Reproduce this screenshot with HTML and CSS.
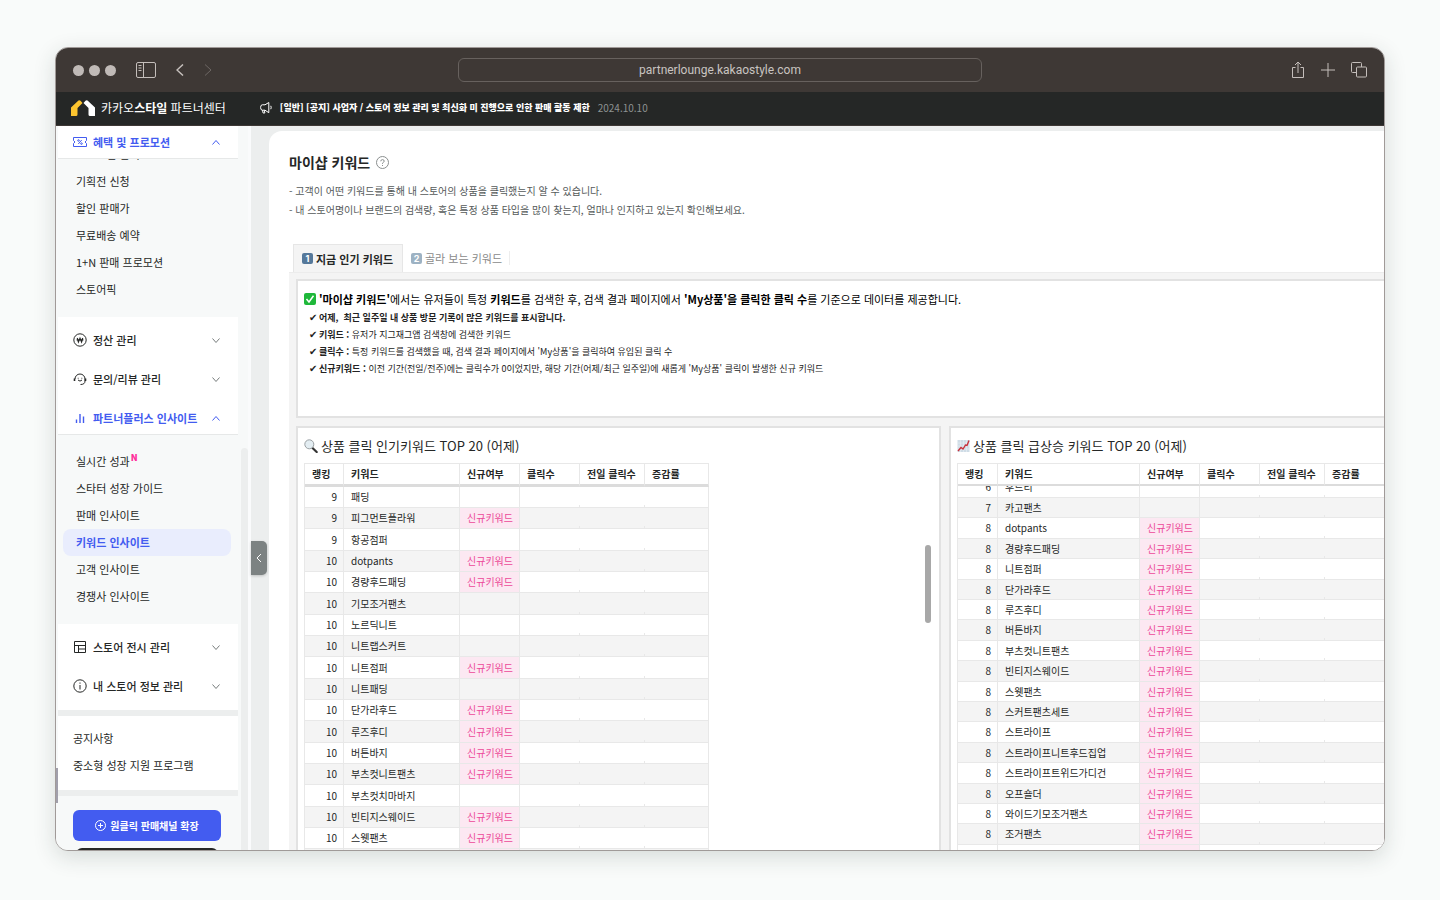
FILE: index.html
```html
<!DOCTYPE html>
<html lang="ko">
<head>
<meta charset="utf-8">
<title>카카오스타일 파트너센터</title>
<link rel="stylesheet" href="styles.css">
</head>
<body>
<div class="window">
  <div class="toolbar">
    <div class="tools">
      <span class="dots"><i></i><i></i><i></i></span>
      <button class="tool" aria-label="사이드바"><svg width="20" height="16" viewBox="0 0 20 16"><rect x=".5" y=".5" width="19" height="15" rx="1.5"/><path d="M7.500 .5v15M2.500 3.500h3M2.500 6h3M2.500 8.500h3"/></svg></button>
      <button class="tool back" aria-label="뒤로"><svg width="8" height="12" viewBox="0 0 8 12"><path d="M7 .5 1 6l6 5.500" stroke-width="1.500"/></svg></button>
      <button class="tool forward" aria-label="앞으로"><svg width="8" height="12" viewBox="0 0 8 12"><path d="m1 .5 6 5.500-6 5.500"/></svg></button>
    </div>
    <input class="address" aria-label="주소" value="partnerlounge.kakaostyle.com">
    <div class="tools right">
      <button class="tool" aria-label="공유"><svg width="14" height="18" viewBox="0 0 14 18"><path d="M4.500 6.500h-3v10h11v-10h-3M7 12V1.500M4 4l3-3 3 3"/></svg></button>
      <button class="tool" aria-label="새 탭"><svg width="14" height="14" viewBox="0 0 14 14"><path d="M7 0v14M0 7h14"/></svg></button>
      <button class="tool" aria-label="탭 개요"><svg width="16" height="16" viewBox="0 0 16 16"><path d="M5 10.500H1.500a1 1 0 0 1-1-1v-8a1 1 0 0 1 1-1h8a1 1 0 0 1 1 1V5"/><rect x="5.500" y="5" width="10" height="10" rx="1"/></svg></button>
    </div>
  </div>
  <header class="topbar">
    <a class="brand" href="#"><svg width="24" height="16" viewBox="0 0 24 16"><path d="M0 16V7.500L7.500 .5Q8.500-.2 9.500 .8L11.500 3 6.500 8v6.500Q6.500 16 5 16z" fill="#fdc52f"/><path d="M12.500 3 14.500 .8Q15.500-.2 16.500 .5L24 7.500V16h-5q-1.500 0-1.500-1.500V8z" fill="#fff"/></svg><span>카카오<b>스타일</b> 파트너센터</span></a>
    <a class="notice" href="#"><svg width="12" height="12" viewBox="0 0 12 12" fill="none" stroke="#fff"><path d="M5 2.800H2.300Q.6 2.800 .6 5.500T2.300 8.200H5L8.800 10.700V.5L5 2.800M2.500 8.200l.6 2.800h1.700l-.4-2.800M10.800 3.800q.8 1.700 0 3.400"/></svg><strong>[일반] [공지] 사업자 / 스토어 정보 관리 및 최신화 미 진행으로 인한 판매 활동 제한</strong><time>2024.10.10</time></a>
  </header>
  <div class="body">
    <nav class="sidebar">
      <div class="menu">
        <div class="heads first"><button class="head on"><svg class="ico" viewBox="0 0 14 14"><path d="M.5 2.500h13v3l-1.500 1.500 1.500 1.500v3H.5v-3L2 7 .5 5.500zM8.700 5 5.300 9"/><circle cx="5.500" cy="5.500" r=".8"/><circle cx="8.500" cy="8.600" r=".8"/></svg><span>혜택 및 프로모션</span><svg class="chev" viewBox="0 0 8 5"><path d="m.5 4.500 3.500-4 3.500 4"/></svg></button></div>
        <div class="sub scrolled"><ul>
          <li><a href="#">프로모션 관리</a></li><li><a href="#">기획전 신청</a></li><li><a href="#">할인 판매가</a></li><li><a href="#">무료배송 예약</a></li><li><a href="#">1+N 판매 프로모션</a></li><li><a href="#">스토어픽</a></li>
        </ul></div>
        <div class="heads">
          <button class="head"><svg class="ico" viewBox="0 0 14 14"><circle cx="7" cy="7" r="6.200"/><path d="m4.300 5 1.100 4L7 5.300 8.600 9l1.100-4M3.600 6.800h6.800" stroke-width="1.200"/></svg><span>정산 관리</span><svg class="chev" viewBox="0 0 8 5"><path d="m.5 .5 3.500 4 3.500-4"/></svg></button>
          <button class="head"><svg class="ico" viewBox="0 0 14 14"><path d="M2 7a5 5 0 0 1 10 0v2q0 3.500-4.500 3.500M5 8q2 2.200 4 0M5.200 5.800v.8M8.800 5.800v.8"/><path d="M1.500 6.500V9M12.500 6.500V9" stroke-width="1.600"/></svg><span>문의/리뷰 관리</span><svg class="chev" viewBox="0 0 8 5"><path d="m.5 .5 3.500 4 3.500-4"/></svg></button>
          <button class="head on"><svg class="ico" viewBox="0 0 14 14"><path d="M3.500 8.500V12M7 3v9M10.500 5.500V12" stroke-width="1.400"/></svg><span>파트너플러스 인사이트</span><svg class="chev" viewBox="0 0 8 5"><path d="m.5 4.500 3.500-4 3.500 4"/></svg></button>
        </div>
        <div class="sub"><ul>
          <li><a href="#">실시간 성과<sup>N</sup></a></li><li><a href="#">스타터 성장 가이드</a></li><li><a href="#">판매 인사이트</a></li><li><a class="current" href="#">키워드 인사이트</a></li><li><a href="#">고객 인사이트</a></li><li><a href="#">경쟁사 인사이트</a></li>
        </ul></div>
        <div class="heads last">
          <button class="head"><svg class="ico" viewBox="0 0 14 14"><path d="M1.500 1.500h11v11h-11zM1.500 5.500h11M5.500 5.500v7M5.500 9h7"/></svg><span>스토어 전시 관리</span><svg class="chev" viewBox="0 0 8 5"><path d="m.5 .5 3.500 4 3.500-4"/></svg></button>
          <button class="head"><svg class="ico" viewBox="0 0 14 14"><circle cx="7" cy="7" r="6.200"/><path d="M7 6v4.500M7 3.500v1.200"/></svg><span>내 스토어 정보 관리</span><svg class="chev" viewBox="0 0 8 5"><path d="m.5 .5 3.500 4 3.500-4"/></svg></button>
        </div>
        <ul class="links"><li><a href="#">공지사항</a></li><li><a href="#">중소형 성장 지원 프로그램</a></li></ul>
        <div class="actions"><button class="primary"><svg width="11" height="11" viewBox="0 0 11 11" fill="none" stroke="#fff"><circle cx="5.500" cy="5.500" r="5"/><path d="M5.500 3v5M3 5.500h5"/></svg>원클릭 판매채널 확장</button><button class="dark" aria-label="더보기"></button></div>
      </div>
      <div class="track"></div>
    </nav>
    <div class="gutter"><button class="fold" aria-label="메뉴 접기"><svg width="6" height="10" viewBox="0 0 6 10"><path d="M5 1 1 5l4 4" fill="none" stroke="#fff"/></svg></button></div>
    <main class="page">
      <h1>마이샵 키워드 <svg width="13" height="13" viewBox="0 0 13 13" fill="none" stroke="#8a8f8f"><circle cx="6.500" cy="6.500" r="6"/><path d="M4.800 5.300Q4.800 3.600 6.500 3.600T8.200 5.200Q8.200 6 6.500 7v.8M6.500 9v1"/></svg></h1>
      <p class="lead">- 고객이 어떤 키워드를 통해 내 스토어의 상품을 클릭했는지 알 수 있습니다.<br>- 내 스토어명이나 브랜드의 검색량, 혹은 특정 상품 타입을 많이 찾는지, 얼마나 인지하고 있는지 확인해보세요.</p>
      <div class="tabs"><button class="tab active"><i>1</i>지금 인기 키워드</button><button class="tab"><i>2</i>골라 보는 키워드</button><span class="rule"></span></div>
      <div class="board">
        <section class="box info">
          <h2><svg width="12" height="12" viewBox="0 0 12 12"><rect width="12" height="12" rx="2" fill="#1fb83a"/><path d="m2.500 6 2.500 3L9.500 2.800" fill="none" stroke="#fff" stroke-width="1.500"/></svg><span><b>'마이샵 키워드'</b>에서는 유저들이 특정 <b>키워드</b>를 검색한 후, 검색 결과 페이지에서 <b>'My상품'을 클릭한 클릭 수</b>를 기준으로 데이터를 제공합니다.</span></h2>
          <ul>
            <li><b>어제,&nbsp; 최근 일주일 내 상품 방문 기록이 많은 키워드를 표시합니다.</b></li>
            <li><b>키워드 :</b> 유저가 지그재그앱 검색창에 검색한 키워드</li>
            <li><b>클릭수 :</b> 특정 키워드를 검색했을 때, 검색 결과 페이지에서 'My상품'을 클릭하여 유입된 클릭 수</li>
            <li><b>신규키워드 :</b> 이전 기간(전일/전주)에는 클릭수가 0이었지만, 해당 기간(어제/최근 일주일)에 새롭게 'My상품' 클릭이 발생한 신규 키워드</li>
          </ul>
        </section>
        <div class="panels">
          <section class="box panel">
            <h3><svg width="14" height="14" viewBox="0 0 14 14"><path d="m8.500 9 4.200 4" stroke="#333" stroke-width="2.200" stroke-linecap="round"/><circle cx="5.300" cy="5.300" r="4.500" fill="#e3edf2" stroke="#9aa0a3"/></svg>상품 클릭 인기키워드 TOP 20 (어제)</h3>
            <table class="popular">
              <thead><tr><th>랭킹</th><th>키워드</th><th>신규여부</th><th>클릭수</th><th>전일 클릭수</th><th>증감률</th></tr></thead>
              <tbody>
                <tr><td>9</td><td>패딩</td><td></td><td></td><td></td><td></td></tr>
                <tr><td>9</td><td>피그먼트플라워</td><td class="new">신규키워드</td><td></td><td></td><td></td></tr>
                <tr><td>9</td><td>항공점퍼</td><td></td><td></td><td></td><td></td></tr>
                <tr><td>10</td><td>dotpants</td><td class="new">신규키워드</td><td></td><td></td><td></td></tr>
                <tr><td>10</td><td>경량후드패딩</td><td class="new">신규키워드</td><td></td><td></td><td></td></tr>
                <tr><td>10</td><td>기모조거팬츠</td><td></td><td></td><td></td><td></td></tr>
                <tr><td>10</td><td>노르딕니트</td><td></td><td></td><td></td><td></td></tr>
                <tr><td>10</td><td>니트랩스커트</td><td></td><td></td><td></td><td></td></tr>
                <tr><td>10</td><td>니트점퍼</td><td class="new">신규키워드</td><td></td><td></td><td></td></tr>
                <tr><td>10</td><td>니트패딩</td><td></td><td></td><td></td><td></td></tr>
                <tr><td>10</td><td>단가라후드</td><td class="new">신규키워드</td><td></td><td></td><td></td></tr>
                <tr><td>10</td><td>루즈후디</td><td class="new">신규키워드</td><td></td><td></td><td></td></tr>
                <tr><td>10</td><td>버튼바지</td><td class="new">신규키워드</td><td></td><td></td><td></td></tr>
                <tr><td>10</td><td>부츠컷니트팬츠</td><td class="new">신규키워드</td><td></td><td></td><td></td></tr>
                <tr><td>10</td><td>부츠컷치마바지</td><td></td><td></td><td></td><td></td></tr>
                <tr><td>10</td><td>빈티지스웨이드</td><td class="new">신규키워드</td><td></td><td></td><td></td></tr>
                <tr><td>10</td><td>스웻팬츠</td><td class="new">신규키워드</td><td></td><td></td><td></td></tr>
                <tr><td></td><td></td><td class="new"></td><td></td><td></td><td></td></tr>
              </tbody>
            </table>
            <div class="thumb"></div>
          </section>
          <section class="box panel">
            <h3><svg width="13" height="14" viewBox="0 0 12 14"><path d="M0 1h12v12H0z" fill="#cfdce6"/><path d="M0 4h12M0 7h12M0 10h12M3 1v12M6 1v12M9 1v12" stroke="#e9f0f5" stroke-width=".6"/><path d="m.5 12 3-3.500 2 1.500L8 6l1.500.5L11.500 1.500" fill="none" stroke="#c8313c" stroke-width="1.400"/></svg>상품 클릭 급상승 키워드 TOP 20 (어제)</h3>
            <table class="rising">
              <thead><tr><th>랭킹</th><th>키워드</th><th>신규여부</th><th>클릭수</th><th>전일 클릭수</th><th>증감률</th></tr></thead>
              <tbody>
                <tr class="cut"><td><span>6</span></td><td><span>후드티</span></td><td></td><td></td><td></td><td></td></tr>
                <tr><td>7</td><td>카고팬츠</td><td></td><td></td><td></td><td></td></tr>
                <tr><td>8</td><td>dotpants</td><td class="new">신규키워드</td><td></td><td></td><td></td></tr>
                <tr><td>8</td><td>경량후드패딩</td><td class="new">신규키워드</td><td></td><td></td><td></td></tr>
                <tr><td>8</td><td>니트점퍼</td><td class="new">신규키워드</td><td></td><td></td><td></td></tr>
                <tr><td>8</td><td>단가라후드</td><td class="new">신규키워드</td><td></td><td></td><td></td></tr>
                <tr><td>8</td><td>루즈후디</td><td class="new">신규키워드</td><td></td><td></td><td></td></tr>
                <tr><td>8</td><td>버튼바지</td><td class="new">신규키워드</td><td></td><td></td><td></td></tr>
                <tr><td>8</td><td>부츠컷니트팬츠</td><td class="new">신규키워드</td><td></td><td></td><td></td></tr>
                <tr><td>8</td><td>빈티지스웨이드</td><td class="new">신규키워드</td><td></td><td></td><td></td></tr>
                <tr><td>8</td><td>스웻팬츠</td><td class="new">신규키워드</td><td></td><td></td><td></td></tr>
                <tr><td>8</td><td>스커트팬츠세트</td><td class="new">신규키워드</td><td></td><td></td><td></td></tr>
                <tr><td>8</td><td>스트라이프</td><td class="new">신규키워드</td><td></td><td></td><td></td></tr>
                <tr><td>8</td><td>스트라이프니트후드집업</td><td class="new">신규키워드</td><td></td><td></td><td></td></tr>
                <tr><td>8</td><td>스트라이프트위드가디건</td><td class="new">신규키워드</td><td></td><td></td><td></td></tr>
                <tr><td>8</td><td>오프숄더</td><td class="new">신규키워드</td><td></td><td></td><td></td></tr>
                <tr><td>8</td><td>와이드기모조거팬츠</td><td class="new">신규키워드</td><td></td><td></td><td></td></tr>
                <tr><td>8</td><td>조거팬츠</td><td class="new">신규키워드</td><td></td><td></td><td></td></tr>
                <tr><td></td><td></td><td class="new"></td><td></td><td></td><td></td></tr>
              </tbody>
            </table>
          </section>
        </div>
      </div>
    </main>
  </div>
</div>
</body>
</html>
```
FILE: styles.css
```css
* { box-sizing: border-box; }
body {
  margin: 0;
  height: 100vh;
  padding: 47px 55px 49px;
  background: #f9fbfa;
  color: #252726;
  font: 11px/16px "Noto Sans CJK KR", "Noto Sans", sans-serif;
  overflow: hidden;
}
button, input { font: inherit; color: inherit; border: 0; background: none; padding: 0; margin: 0; }
button { cursor: pointer; }
a { color: inherit; text-decoration: none; }
ul { list-style: none; margin: 0; padding: 0; }
h1, h2, h3, p { margin: 0; }
i { font-style: normal; }
svg { flex: none; display: block; }

.window {
  height: 100%;
  display: flex;
  flex-direction: column;
  overflow: hidden;
  border: 1px solid #a09a98;
  border-radius: 13px;
  background: #eceeee;
  box-shadow: 0 6px 22px rgba(30, 50, 45, .16);
}

/* browser toolbar */
.toolbar {
  flex: none;
  height: 44px;
  display: grid;
  grid-template-columns: 1fr 524px 1fr;
  align-items: center;
  padding: 0 17px;
  background: #3e3835;
  color: #c4bebb;
}
.tools { display: flex; align-items: center; }
.tools.right { justify-content: flex-end; gap: 16px; }
.tool { display: flex; }
.tool svg { fill: none; stroke: #c4bebb; }
.dots { display: flex; gap: 5px; margin-right: 20px; }
.dots i { width: 11px; height: 11px; border-radius: 50%; background: #c0bab7; }
.back { margin-left: 20px; }
.forward { margin-left: 20px; opacity: .35; }
.address {
  height: 24px;
  border: 1px solid #67615e;
  border-radius: 6px;
  text-align: center;
  font: 12px/16px Roboto, sans-serif;
  color: #c9c4c1;
}

/* service header */
.topbar {
  flex: none;
  height: 34px;
  display: flex;
  align-items: center;
  gap: 34px;
  padding: 0 15px 2px;
  background: #252726;
  border-bottom: 1px solid #3e3835;
  color: #fff;
  white-space: nowrap;
}
.brand { display: flex; align-items: center; gap: 6px; font-size: 12px; font-weight: 400; }
.notice { display: flex; align-items: center; gap: 8px; font-size: 9px; font-weight: 700; }
.notice time { color: #8d9292; font-size: 10px; font-weight: 400; }

.body { flex: 1; min-height: 0; display: flex; }

/* sidebar */
.sidebar { flex: none; width: 195px; display: flex; background: #f7f9f9; border-right: 3px solid #fafbfc; }
.menu { flex: none; width: 182px; padding-left: 2px; background: linear-gradient(#a19fab, #a19fab) 0 642px / 2px 35px no-repeat; }
.heads { display: flex; flex-direction: column; gap: 7px; padding-top: 7px; background: #fff; border-bottom: 1px solid #e6e8e8; }
.heads.first { padding-top: 0; }
.heads.last { padding-bottom: 8px; border-bottom: 6px solid #eceeee; }
.head { height: 32px; display: flex; align-items: center; gap: 6px; padding: 0 18px 0 15px; font-weight: 500; }
.head span { flex: 1; text-align: left; white-space: nowrap; }
.head.on { color: #435cf0; font-weight: 700; }
.ico { width: 14px; height: 14px; fill: none; stroke: currentColor; }
.chev { width: 8px; height: 5px; fill: none; stroke: #777c7c; }
.on .chev { stroke: #435cf0; }
.sub { padding: 13px 7px 14px 5px; overflow: hidden; }
.sub.scrolled { padding-top: 0; }
.sub.scrolled ul { margin-top: -18px; }
.sub a { display: block; height: 27px; padding: 5px 13px; border-radius: 8px; }
.sub a.current { background: #e9edfd; color: #435cf0; font-weight: 700; }
.sub sup { color: #ff2d9b; font-size: 9px; font-weight: 900; line-height: 0; vertical-align: 5px; margin-left: 1px; }
.links { padding: 9px 15px 11px; background: #fff; border-bottom: 6px solid #eceeee; }
.links a { display: block; height: 27px; padding: 5px 0; }
.actions { display: flex; flex-direction: column; align-items: stretch; gap: 7px; padding: 14px 17px 0 15px; }
.primary {
  height: 31px;
  display: flex;
  align-items: center;
  justify-content: center;
  gap: 4px;
  border-radius: 6px;
  background: #435cf0;
  color: #fff;
  font-size: 10px;
  font-weight: 700;
}
.dark { height: 32px; margin: 0 3px; border-radius: 6px; background: #252726; }
.track { flex: 1; margin: 322px 0 0 3px; background: #eceeee; border-radius: 4px 4px 0 0; }

.gutter { flex: none; width: 18px; padding-top: 415px; }
.fold { width: 16px; height: 34px; display: flex; align-items: center; justify-content: center; border-radius: 0 5px 5px 0; background: #7c8282; box-shadow: 0 1px 3px rgba(0, 0, 0, .2); }

/* page */
.page { flex: 1; min-width: 0; margin-top: 5px; padding: 19px 0 0 20px; background: #fff; border-top-left-radius: 13px; overflow: hidden; white-space: nowrap; }
h1 { display: flex; align-items: center; gap: 6px; font-size: 14px; line-height: 24px; font-weight: 700; }
.lead { margin-top: 7px; line-height: 19px; font-size: 10px; color: #555a5a; }
.tabs { display: flex; align-items: flex-end; margin: 25px 0 0 4px; }
.tab { height: 28px; display: flex; align-items: center; gap: 3px; padding: 0 7px 0 8px; color: #8a8a8a; }
.tab i { width: 11px; height: 11px; border-radius: 2px; background: #9db2c3; color: #fff; font: 700 9px/11px Inter, sans-serif; text-align: center; }
.tab.active { padding-right: 9px; border: 1px solid #e6e6e6; border-bottom: 0; background: #f4f4f4; color: #252726; font-weight: 700; }
.tab.active i { background: #55789a; }
.rule { width: 1px; height: 14px; margin-bottom: 7px; background: #ededed; }
.board { min-width: 1312px; padding: 6px 7px 7px; background: #f4f4f4; border-top: 1px solid #ececec; }
.box { border: 2px solid #e2e2e2; background: #fff; }
.info { min-height: 139px; padding: 10px 6px; color: #222; }
.info h2 { display: flex; align-items: center; gap: 3px; font-size: 11px; line-height: 16px; font-weight: 400; color: #000; }
.info ul { margin: 2px 0 0 5px; }
.info li { display: flex; align-items: center; height: 17px; font-size: 9px; line-height: 17px; white-space: pre; }
.info li::before { content: "✔"; width: 10px; font-family: "DejaVu Sans", sans-serif; font-size: 10px; }

.panels { display: grid; grid-template-columns: 1fr 1fr; gap: 8px; margin-top: 8px; }
.panel { position: relative; min-height: 440px; padding: 9px 6px; }
.panel h3 { display: flex; align-items: center; gap: 3px; font-size: 13px; line-height: 17px; font-weight: 400; margin-bottom: 9px; }
table { border-collapse: separate; border-spacing: 0; table-layout: fixed; width: 405px; font-size: 10px; line-height: 14px; border-left: 1px solid #e8e8e8; }
.rising { width: 480px; }
th { height: 24px; padding: 0 7px; text-align: left; font-weight: 700; border: solid #e8e8e8; border-width: 1px 1px 3px 0; border-bottom-color: #dcdcdc; }
.rising th { height: 23px; border-bottom-width: 2px; }
td { padding: 0 7px; border: solid #e8e8e8; border-width: 0 1px 1px 0; }
th:nth-child(1) { width: 39px; }
th:nth-child(2) { width: 116px; }
th:nth-child(3), th:nth-child(4) { width: 60px; }
th:nth-child(5) { width: 65px; }
.rising th:nth-child(1) { width: 40px; }
.rising th:nth-child(2) { width: 142px; }
td:nth-child(1) { text-align: right; padding-right: 6px; }
td:nth-child(4), td:nth-child(5) {
  border-right-color: transparent;
  background: linear-gradient(#e8e8e8, #e8e8e8) right bottom / 1px 3px no-repeat border-box;
}
tbody tr { height: 21px; }
.popular tbody tr:nth-child(3n) { height: 22px; }
.popular tbody tr:nth-child(even) { background: #f4f4f4; }
.rising tbody tr { height: 20px; }
.rising tbody tr:nth-child(5n), .rising tbody tr:nth-child(5n+3) { height: 21px; }
.rising tbody tr:nth-child(even) { background: #f4f4f4; }
.rising tbody .cut { height: 12px; }
.cut span { display: flex; height: 11px; align-items: flex-end; overflow: hidden; line-height: 20px; }
.cut td:first-child span { justify-content: flex-end; }
td.new { background: #fce8f2; color: #ec4899; }
.thumb { position: absolute; top: 117px; right: 8px; width: 6px; height: 78px; border-radius: 3px; background: #a8a8a8; }
```
